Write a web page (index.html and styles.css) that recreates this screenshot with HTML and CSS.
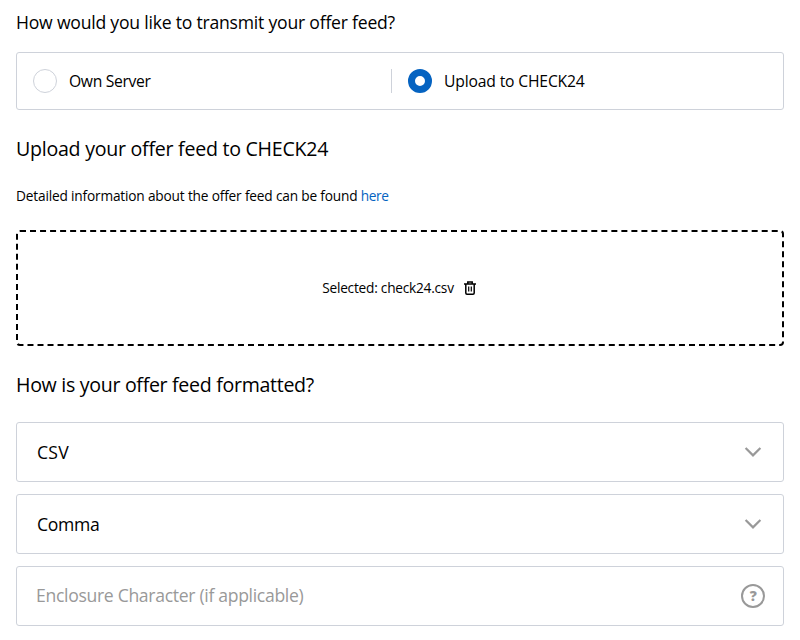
FILE: index.html
```html
<!DOCTYPE html>
<html lang="en">
<head>
    <meta charset="UTF-8">
    <meta name="viewport" content="width=device-width, initial-scale=1.0">
    <title>Offer Feed</title>
    <link rel="stylesheet" href="styles.css">
</head>
<body>
    <form class="feed-form">
        <h2 class="transmit-title"><span>How would you like to transmit your offer feed?</span></h2>
        <div class="radio-group">
            <label class="radio-option">
                <input type="radio" name="transmit" value="server">
                <span class="radio-server">Own Server</span>
            </label>
            <label class="radio-option">
                <input type="radio" name="transmit" value="upload" checked>
                <span class="radio-upload">Upload to CHECK24</span>
            </label>
        </div>

        <h2 class="upload-title"><span>Upload your offer feed to CHECK24</span></h2>
        <p class="info"><span>Detailed information about the offer feed can be found</span> <a href="#">here</a></p>
        <div class="dropzone">
            <span class="file-name">Selected: check24.csv</span>
            <svg class="trash" viewBox="0 0 12 14" fill="none" stroke="#000">
                <path stroke-width="1.5" d="M0 3h12M3.8 3V1h4.4v2M1.8 3v9q0 1.2 1.2 1.2h6q1.2 0 1.2-1.2V3"/>
                <path stroke-width="1.2" d="M4.7 5.4v5M7.3 5.4v5"/>
            </svg>
        </div>

        <h2 class="format-title"><span>How is your offer feed formatted?</span></h2>
        <div class="field">
            <span class="field-csv">CSV</span>
            <svg class="chevron" viewBox="0 0 18 10"><path d="M1.6 1L9 8.4 16.4 1"/></svg>
        </div>
        <div class="field">
            <span class="field-comma">Comma</span>
            <svg class="chevron" viewBox="0 0 18 10"><path d="M1.6 1L9 8.4 16.4 1"/></svg>
        </div>
        <div class="field placeholder">
            <span class="field-enclosure">Enclosure Character (if applicable)</span>
            <span class="help">?</span>
        </div>
    </form>
</body>
</html>
```
FILE: styles.css
```css
* { margin: 0; padding: 0; box-sizing: border-box; }
body { font-family: "Open Sans", "Noto Sans", sans-serif; background: #fff; color: #000; overflow: hidden; }
.feed-form { padding: 8px 16px 0; }
h2 { font-weight: 400; white-space: nowrap; }
.transmit-title { font-size: 17.6px; line-height: 28px; letter-spacing: -0.22px; }
.radio-group { display: flex; height: 58px; margin-top: 16px; border: 1px solid #ced2da; border-radius: 3px; }
.radio-option { display: flex; align-items: center; flex: 0 0 374px; padding-left: 16px; margin: 16px 0; font-size: 15.7px; letter-spacing: -0.34px; }
.radio-option + .radio-option { flex: 1; border-left: 1px solid #ced2da; letter-spacing: -0.17px; }
.radio-option input { appearance: none; width: 24px; height: 24px; margin-right: 12px; border: 1px solid #ced2da; border-radius: 50%; }
.radio-option input:checked { border: 7px solid #0563c1; }
.upload-title, .format-title { font-size: 19.6px; line-height: 28px; letter-spacing: -0.31px; }
.upload-title { margin-top: 25px; letter-spacing: -0.26px; }
.info { margin-top: 23px; font-size: 13.7px; line-height: 20px; letter-spacing: -0.18px; white-space: nowrap; }
.info a { color: #0563c1; letter-spacing: -0.45px; text-decoration: none; }
.dropzone { display: flex; align-items: center; justify-content: center; gap: 10px; height: 116px; margin-top: 24px; padding-right: 2px; border: 2px dashed #000; border-radius: 4px; font-size: 13.7px; letter-spacing: -0.24px; }
.file-name { padding-bottom: 1px; }
.trash { width: 12px; height: 14px; }
.format-title { margin: 25px 0 23px; }
.field { display: flex; align-items: center; justify-content: space-between; height: 60px; margin-bottom: 12px; padding: 0 21px 0 20px; border: 1px solid #ced2da; border-radius: 3px; font-size: 17.6px; letter-spacing: -0.32px; }
.field-csv { letter-spacing: 0.2px; }
.chevron { width: 18px; height: 10px; fill: none; stroke: #999; stroke-width: 2.2; }
.placeholder { padding: 0 18px 2px 19px; color: #999; }
.help { width: 24px; height: 24px; margin-top: 2px; border: 2.5px solid #999; border-radius: 50%; color: #999; font-size: 14px; font-weight: 800; line-height: 20px; text-align: center; }
```
